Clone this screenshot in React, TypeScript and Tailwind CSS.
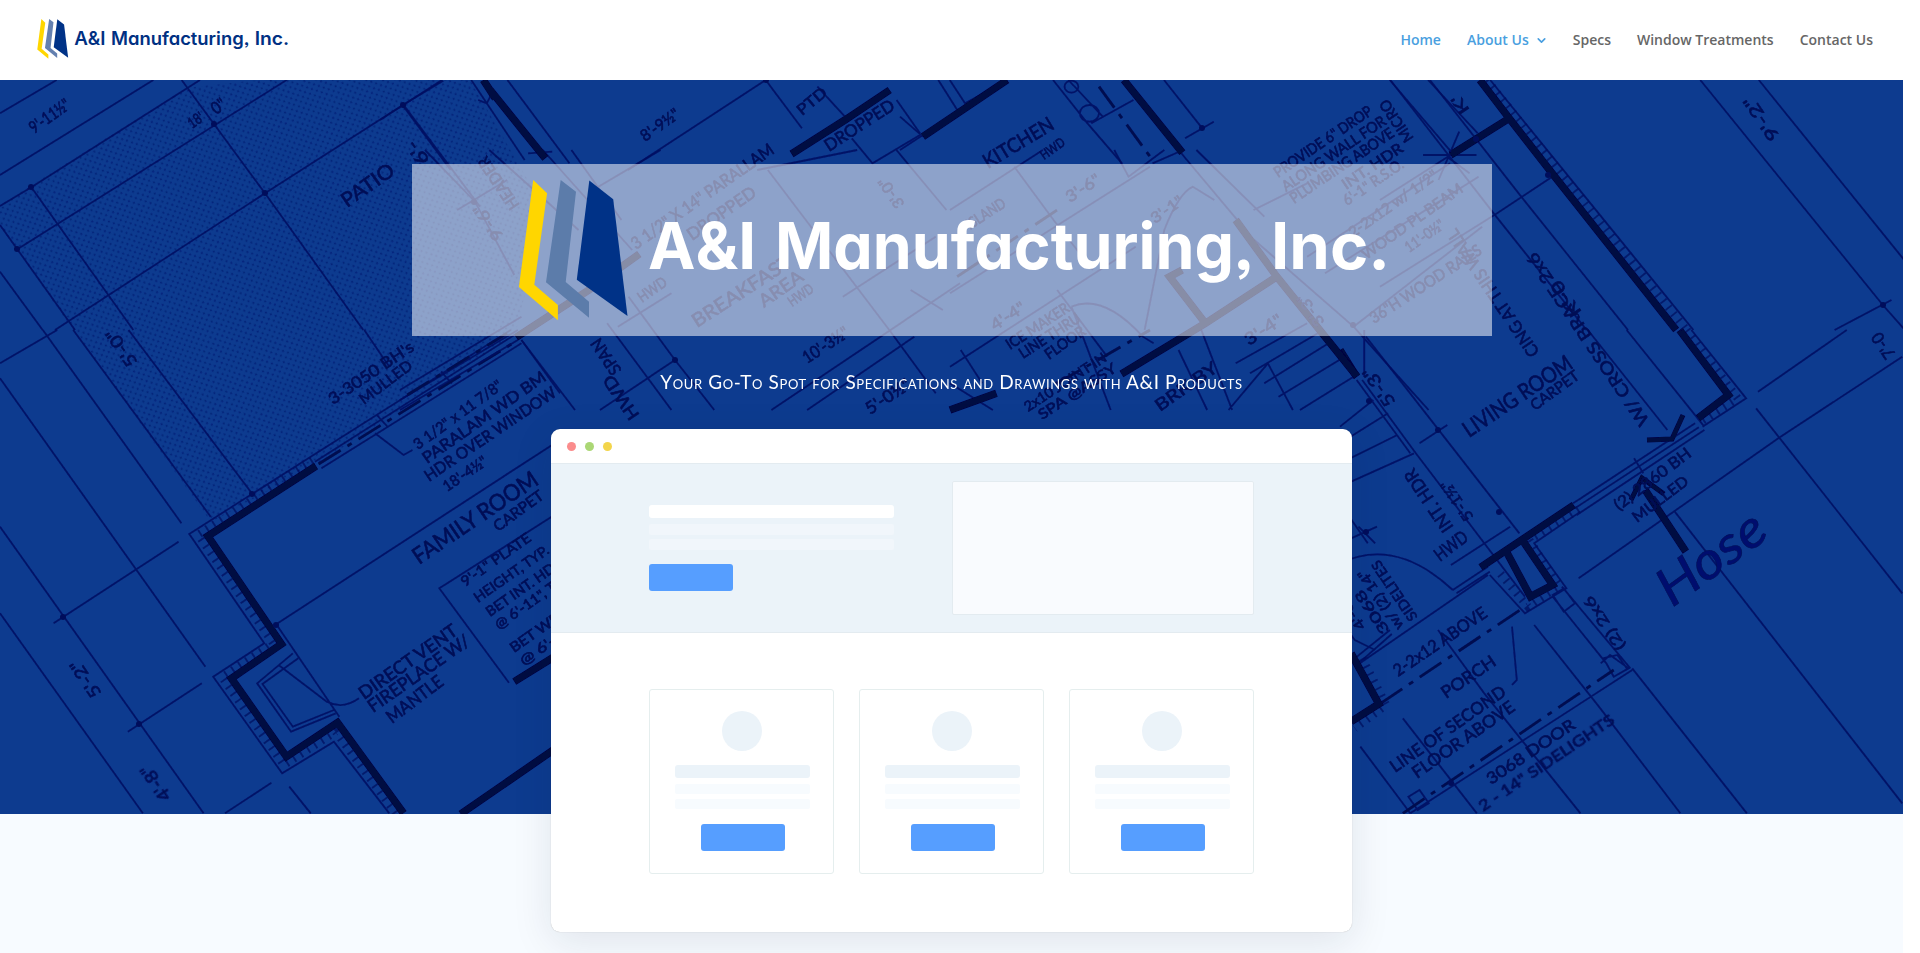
import React from "react";
import { ChevronDown } from "lucide-react";

type Sheet = { x: number; y: number; sx: number; thin: string; wall?: string; hatch?: string; dash?: string };

// Plan sheets: each has its own origin and horizontal scale; the vertical scale is one third.
const sheets: Sheet[] = [
  {
    x: 0, y: 0, sx: 0.3333,
    thin: "M0 340L170 240M0 525L460 240M0 618L94 562L600 240M52 748L860 240M0 675L225 990M0 815L128 990M94 562L400 990M545 240L795 580L1090 990M165 990L795 580L1210 314L1330 242M1210 314L1440 620",
  },
  {
    x: 0, y: 330, sx: 0.35714,
    thin: "M0 100L160 0M120 0L508 580M0 145L575 1010M205 0L590 560M360 0L705 490M0 590L570 1450M0 850L400 1450M150 880L500 635M358 1205L565 1060M630 1450L760 1358M810 1370L870 1450M770 885L1560 335M775 885L950 1160M1560 550L1230 775L1425 1058M1020 0L1090 110M1460 30L1568 190M820 970L720 1060L815 1205L940 1150M835 985L735 1062L820 1190L935 1140M780 1005L915 1115Q960 1140 1005 1105M1050 310L1130 375L1155 360M870 380L1430 0M882 395L1440 15M900 415L1460 40M1055 255L1085 290M1235 125L1265 160M870 380L530 612L740 940L597 1040L790 1330L935 1235L1090 1450",
    wall: "M885 408L582 618L788 942L648 1045L802 1280L945 1178L1130 1450M1290 1452L1560 1252M1440 1055L1560 975",
    hatch: "M875 392L555 614L765 940L622 1042L795 1305L940 1205L1108 1450",
    dash: "M892 402L1450 30",
  },
  {
    x: 1340, y: 330, sx: 0.3699,
    thin: "M70 20L485 610M60 150L205 370L500 800M45 150L190 370M670 0L885 300M775 0L985 290M1130 185L1370 0M645 745L1185 325L1520 80M1125 235L1520 790M905 545L1520 1420M790 1015L1100 1450M600 770L785 1015M525 885L700 1130L920 1450M170 1165L370 1450M265 900L390 1090L650 1450M55 1250L190 1450M630 520L960 280M635 535L970 292M640 555L985 300M795 385L820 430M40 1010L400 735M305 780L400 710M315 790L405 725M0 700Q150 620 305 780M215 340L290 285M0 640L100 590M50 590L95 640M0 520L75 640M0 290L90 210M0 340L130 250M0 400L155 315M0 470L200 370M300 705L460 590M40 985L135 900M50 1000L140 912M0 870L40 930L95 960M575 800L720 1000L740 1040L780 1015L730 975L705 1000M710 985L750 975L775 1015M185 1400L215 1380L240 1420L210 1440ZM575 795L605 775L635 820L605 845ZM465 890L478 1050L465 1065M190 1450L790 1020M950 0L1098 205L980 290M650 545L525 640L612 775L500 850L405 735",
    wall: "M918 0L1050 195L968 265M632 525L380 712M445 655L515 800L575 765L490 625M0 60L45 140M30 970L105 1122L30 1175M825 480L935 665",
    hatch: "M938 0L1075 205L972 278M645 538L512 630L592 768L508 830L425 720M60 985L125 1125L40 1195",
    dash: "M110 1120L500 830M170 1450L740 1020",
  },
  {
    x: 1380, y: 0, sx: 0.3444,
    thin: "M930 240L1460 915L1520 985M1100 240L1530 790M1320 990L1485 900M320 240L910 990M30 240L330 640L600 990M145 240L410 590L720 990M500 530L340 640L0 860M205 465L0 600M125 465L280 465M230 395L170 540M195 470L260 520",
    wall: "M290 240L375 355L500 520L860 990M375 355L205 465",
    hatch: "M310 240L890 990",
  },
  {
    x: 400, y: 150, sx: 0.35714,
    thin: "M70 0L210 155L320 375M160 180L300 90M250 0L500 240M400 0L650 300M540 120L730 0M1030 60L1370 540L1500 730M640 440L770 630L880 780M770 630L560 780M1040 780L1568 400M580 520L760 780M1390 0L1530 180M340 570L490 780M0 720L340 500M0 780L330 570M0 750L330 540M1240 440L1500 260M1430 420L1520 480M1000 60L1280 0M610 530L760 430M1140 780L1440 560M480 0L620 210",
    wall: "M325 562L540 412L670 312",
    dash: "M20 735L300 550",
  },
  {
    x: 950, y: 150, sx: 0.35714,
    thin: "M0 180L260 0M180 50L290 210L400 360M0 430L560 50M0 650L520 290M1000 320L1400 40M1050 370L1480 80M820 240L1130 530L1340 780M1130 530L1490 230M340 470Q430 430 540 560L570 580M545 540L600 240Q640 130 680 110L740 150M700 530L790 780M640 600L720 780M800 640L1000 520M840 670L1030 550M880 700L1060 580M920 740L1090 630M980 780L1130 680M780 780L890 640L960 780M1160 540L1160 680M690 0L880 200M640 0L820 230M850 180L1000 100M300 420L440 620M0 700L120 780M30 600L90 700M460 0L500 80L600 0M340 470L450 780",
    wall: "M480 672L715 520L915 380L800 210M715 520L615 380L650 360M915 380L1140 680M0 780L130 730",
    dash: "M300 700L560 540M20 380L300 180",
  },
  {
    x: 380, y: 80, sx: 0.3444,
    thin: "M265 0L420 240M370 0L550 250M0 120L180 0M65 75L205 270M720 270L1120 0L1225 145M1370 175L1430 250L1568 165M1270 20L1350 110M1500 60L1568 160M285 60L310 70L330 30M430 220L500 215",
    wall: "M300 0L335 55M1195 222L1350 120L1480 30M320 30L480 235",
  },
  {
    x: 900, y: 80, sx: 0.38265,
    thin: "M0 210L280 0M400 0L490 130L580 250M440 0L530 110M690 0L790 145M745 175L820 125M1280 0L1440 215M1380 0L1510 160M500 130L610 60M660 250L740 210M0 110L60 170M100 0L155 100M130 0L170 70L250 20M470 100a25 25 0 1 0 50 0a25 25 0 1 0 -50 0M430 20a18 18 0 1 0 36 0a18 18 0 1 0 -36 0",
    wall: "M585 0L738 218M60 170L280 0",
    dash: "M520 20L660 240",
  },
];

type Note = [x: number, y: number, angle: number, size: number, length: number, text: string];

const notes: Note[] = [
  [34, 134, -35, 17, 46, "9'-11½\""],
  [192, 129, -35, 15, 16, "18'"],
  [216, 115, -35, 17, 14, "0\""],
  [347, 208, -35, 20, 60, "PATIO"],
  [430, 160, 236, 18, 26, "6'-"],
  [138, 362, 236, 17, 42, "5'-0\""],
  [102, 693, 236, 17, 42, "5'-2\""],
  [172, 796, 236, 17, 40, "4'-8\""],
  [333, 405, -34, 16, 99, "3-3050 BH's"],
  [364, 405, -37, 15, 62, "MULLED"],
  [418, 450, -36, 15, 106, "3 1/2\" x 11 7/8\""],
  [427, 464, -35, 16, 147, "PARALAM WD BM"],
  [429, 482, -34, 16, 155, "HDR OVER WINDOW"],
  [447, 492, -34, 15, 50, "18'-4½\""],
  [419, 565, -34, 23, 146, "FAMILY ROOM"],
  [498, 532, -36, 15, 58, "CARPET"],
  [465, 587, -35, 14, 82, "9'-1\" PLATE"],
  [478, 603, -35, 14, 88, "HEIGHT, TYP."],
  [490, 617, -35, 14, 90, "BET INT. HDR"],
  [499, 630, -35, 14, 90, "@ 6'-11\", TYP"],
  [514, 653, -35, 14, 60, "BET WD"],
  [524, 666, -35, 14, 40, "@ 6'-"],
  [364, 700, -35, 18, 116, "DIRECT VENT"],
  [373, 713, -35, 18, 120, "FIREPLACE W/"],
  [392, 724, -37, 18, 66, "MANTLE"],
  [1469, 438, -34, 22, 127, "LIVING ROOM"],
  [1535, 411, -36, 15, 56, "CARPET"],
  [1650, 421, 236, 17, 205, "W/ CROSS BRACE 2x6"],
  [1619, 511, -37, 16, 92, "(2) 2860 BH"],
  [1637, 523, -37, 15, 66, "MULLED"],
  [1440, 562, -37, 18, 37, "HWD"],
  [1454, 527, 236, 18, 72, "INT. HDR"],
  [1396, 402, 236, 17, 44, "5'-3\""],
  [1474, 517, 236, 15, 46, "5'-1½\""],
  [1626, 646, 236, 15, 62, "(2) 2x6"],
  [1398, 677, -34, 17, 109, "2-2x12 ABOVE"],
  [1446, 699, -34, 17, 62, "PORCH"],
  [1395, 773, -35, 17, 137, "LINE OF SECOND"],
  [1417, 779, -35, 17, 121, "FLOOR ABOVE"],
  [1491, 785, -34, 16, 103, "3068 DOOR"],
  [1483, 812, -34, 16, 160, "2 - 14\" SIDELIGHTS"],
  [1418, 617, 236, 14, 70, "SIDELITES"],
  [1404, 626, 236, 14, 70, "w/ (2) 14\""],
  [1390, 630, 236, 14, 50, "3068"],
  [1366, 626, 236, 14, 30, "4'-0"],
  [988, 169, -31, 20, 79, "KITCHEN"],
  [1044, 160, -35, 13, 27, "HWD"],
  [697, 328, -33, 19, 115, "BREAKFAST"],
  [764, 308, -35, 18, 50, "AREA"],
  [792, 307, -35, 14, 28, "HWD"],
  [642, 303, -35, 15, 32, "HWD"],
  [636, 250, -35, 17, 170, "3 1/2\" X 14\" PARALLAM"],
  [692, 241, -35, 17, 80, "DROPPED"],
  [645, 142, -35, 16, 44, "8'-9½\""],
  [829, 152, -33, 17, 80, "DROPPED"],
  [802, 116, -40, 15, 34, "PTD"],
  [1070, 203, -33, 16, 38, "3'-6\""],
  [970, 230, -33, 15, 44, "ISLAND"],
  [1155, 224, -35, 15, 36, "3'-1\""],
  [807, 364, -33, 17, 52, "10'-3½\""],
  [870, 415, -33, 17, 50, "5'-0½\""],
  [995, 331, -33, 16, 38, "4'-4\""],
  [1010, 350, -33, 15, 72, "ICE MAKER"],
  [1023, 359, -33, 15, 70, "LINE THRU"],
  [1049, 360, -35, 15, 46, "FLOOR"],
  [1028, 412, -33, 14, 95, "2x10 JOINT IN"],
  [1042, 420, -33, 14, 90, "SPA @ASSY"],
  [1160, 412, -35, 17, 72, "BRK BY"],
  [1249, 346, -33, 17, 42, "3'-4\""],
  [1374, 324, -33, 16, 130, "36\"H WOOD RAILS"],
  [1409, 253, -35, 15, 45, "11'-0½\""],
  [1353, 238, -35, 15, 105, "2-2x12 w/ 1/2\""],
  [1366, 260, -35, 15, 120, "WOOD PL BEAM"],
  [1278, 178, -34, 15, 115, "PROVIDE 6\" DROP"],
  [1286, 192, -34, 15, 122, "ALONG WALL FOR"],
  [1294, 204, -34, 15, 122, "PLUMBING ABOVE"],
  [1346, 190, -34, 15, 70, "INT. HDR"],
  [1347, 206, -34, 15, 70, "6'-1\" R.S.O."],
  [1414, 138, 236, 15, 48, "MICRO"],
  [1470, 110, 236, 15, 20, "K'"],
  [1780, 136, 236, 17, 50, "9'-2\""],
  [1540, 352, 236, 17, 150, "CING AT THIS WALL"],
  [1582, 312, 236, 17, 40, "K'-0"],
  [1896, 354, 236, 17, 28, "7'-0"],
  [622, 370, 236, 17, 40, "SPAN"],
  [640, 415, 236, 17, 50, "HWD"],
  [504, 236, 236, 16, 40, "9'-6\""],
  [520, 205, 236, 16, 60, "HEADER"],
  [905, 204, 236, 15, 34, "3'-0\""],
  [1325, 322, 236, 15, 36, "3'-3\""],
];

const nodes: [number, number][] = [
  [31, 187], [17, 249], [403, 105], [265, 193], [214, 124], [252, 494], [276, 625], [63, 617], [139, 724],
  [474, 202], [766, 80], [675, 360], [1202, 128], [1438, 430], [1369, 401], [1476, 139], [1548, 175], [1883, 305],
  [1499, 512], [1353, 325], [1451, 783], [1366, 532],
];

function Blueprint() {
  return (
    <svg className="absolute inset-0 h-full w-full" viewBox="0 80 1903 734" preserveAspectRatio="none" aria-hidden="true">
      <defs>
        <pattern id="stipple" width="7.6" height="7" patternUnits="userSpaceOnUse" patternTransform="rotate(-24)">
          <circle cx="1.8" cy="1.8" r="1.05" fill="#031a70" />
          <circle cx="5.6" cy="5.3" r="1.05" fill="#031a70" />
        </pattern>
        <filter id="scan" x="0" y="0" width="100%" height="100%">
          <feGaussianBlur stdDeviation="0.6" />
        </filter>
      </defs>
      <g filter="url(#scan)">
        <path d="M0 205L186 88L260 80H470L545 210L515 335L320 462L211 522L73 330L0 226Z" fill="url(#stipple)" opacity="0.7" />
        {sheets.map((s, i) => (
          <g key={i} transform={`translate(${s.x} ${s.y}) scale(${s.sx} 0.33333)`} fill="none">
            <path d={s.thin} stroke="#020c62" strokeOpacity="0.88" strokeWidth="1.8" vectorEffect="non-scaling-stroke" />
            {s.hatch && (
              <path d={s.hatch} stroke="#030f60" strokeOpacity="0.75" strokeWidth="8" strokeDasharray="1.8 6.5" vectorEffect="non-scaling-stroke" />
            )}
            {s.dash && (
              <path d={s.dash} stroke="#020a50" strokeWidth="2.8" strokeDasharray="26 8 5 8" vectorEffect="non-scaling-stroke" />
            )}
            {s.wall && <path d={s.wall} stroke="#020742" strokeWidth="7.5" vectorEffect="non-scaling-stroke" />}
          </g>
        ))}
        {nodes.map(([x, y], i) => (
          <circle key={i} cx={x} cy={y} r="3" fill="#030d5c" />
        ))}
        <path d="M1647 440L1672 439L1683 415M1631 500L1642 478L1664 494" fill="none" stroke="#020742" strokeWidth="5" />
        <g fill="#020b56" fontFamily="Lato, sans-serif" stroke="#020b56" strokeWidth="0.6">
          {notes.map(([x, y, a, size, len, text], i) => (
            <text key={i} transform={`translate(${x} ${y}) rotate(${a})`} fontSize={size} textLength={len} lengthAdjust="spacingAndGlyphs">
              {text}
            </text>
          ))}
          <text transform="translate(1672 608) rotate(-36)" fontSize="52" fontStyle="italic" textLength="122" lengthAdjust="spacingAndGlyphs" fill="#04106e">
            Hose
          </text>
        </g>
      </g>
    </svg>
  );
}

function LogoMark({ slate }: { slate: string }) {
  return (
    <g>
      <path d="M533.2 180L547.1 193.3L534.3 284.7L557.9 305V320.3L518.9 287Z" fill="#ffd600" />
      <path d="M560.7 180L576 191.7L565.7 282L589 301.7V317.7L546 282.3Z" fill={slate} />
      <path d="M589.3 180.5L613.2 199.3L627.5 316L576.8 279.7Z" fill="#003287" />
    </g>
  );
}

function Wordmark({ fill, weight, transform }: { fill: string; weight: number; transform?: string }) {
  return (
    <text
      y="269.3"
      transform={transform}
      fill={fill}
      fontSize="64"
      fontWeight={weight}
      fontFamily="Inter, 'Liberation Sans', sans-serif"
      style={{ fontFeatureSettings: '"cv11", "ss03"' }}
    >
      <tspan x="648" textLength="108" lengthAdjust="spacingAndGlyphs">A&amp;I</tspan>{" "}
      <tspan x="775" textLength="478" lengthAdjust="spacingAndGlyphs">Manufacturing,</tspan>{" "}
      <tspan x="1271" textLength="119" lengthAdjust="spacingAndGlyphs">Inc.</tspan>
    </text>
  );
}

const links = [
  { label: "Home", active: true },
  { label: "About Us", active: true, menu: true },
  { label: "Specs" },
  { label: "Window Treatments" },
  { label: "Contact Us" },
];

function Header() {
  return (
    <header className="flex h-20 items-center justify-between bg-white pr-[30px] pl-[37px]">
      <svg className="mt-[-3px] h-10 w-[256px]" viewBox="518 180 901 140.8" role="img" aria-label="A&I Manufacturing, Inc.">
        <LogoMark slate="#6480b0" />
        <Wordmark fill="#003082" weight={600} transform="translate(-12 4) scale(1.02 1)" />
      </svg>
      <nav className="flex items-center gap-[26px] font-['Open_Sans',sans-serif] text-sm font-semibold">
        {links.map((l) => (
          <a key={l.label} href="#" className={l.active ? "flex items-center text-[#4a9fe0]" : "flex items-center text-[#666666]"}>
            {l.label}
            {l.menu && <ChevronDown className="mt-px ml-[6px] size-[13px] -mr-px" strokeWidth={3} />}
          </a>
        ))}
      </nav>
    </header>
  );
}

function FeatureCard() {
  return (
    <div className="flex h-[185px] w-[185px] flex-col items-center rounded-[3px] border border-[#e5eeee] pt-[21px]">
      <div className="size-10 rounded-full bg-[#ebf3f9]" />
      <div className="mt-[14px] ml-[2px] h-[13px] w-[135px] rounded-[3px] bg-[#ebf3f9]" />
      <div className="mt-[6px] ml-[2px] h-[10px] w-[135px] rounded-[2px] bg-[#f7fbfe]" />
      <div className="mt-[5px] ml-[2px] h-[10px] w-[135px] rounded-[2px] bg-[#f7fbfe]" />
      <div className="mt-[15px] ml-[2px] h-[27px] w-[84px] rounded-[3px] bg-[#569eff]" />
    </div>
  );
}

function BrowserMockup() {
  return (
    <div className="h-[503px] w-[801px] shrink-0 overflow-hidden rounded-[9px] bg-white shadow-[0_0_1px_rgba(0,0,0,0.3),0_10px_40px_rgba(20,30,60,0.1)]">
      <div className="flex h-[34px] items-center gap-[9px] pl-4">
        <span className="size-[9px] rounded-full bg-[#fb8c8c]" />
        <span className="size-[9px] rounded-full bg-[#abd775]" />
        <span className="size-[9px] rounded-full bg-[#f3d54b]" />
      </div>
      <div className="flex h-[170px] items-start justify-between border-y border-[#e3ebf0] bg-[#ebf3f9] pr-[98px] pl-[98px]">
        <div className="pt-[41px]">
          <div className="h-[13px] w-[245px] rounded-[3px] bg-white" />
          <div className="mt-[6px] h-[11px] w-[245px] rounded-[2px] bg-[#f1f6fb]" />
          <div className="mt-1 h-[11px] w-[245px] rounded-[2px] bg-[#f1f6fb]" />
          <div className="mt-[14px] h-[27px] w-[84px] rounded-[3px] bg-[#569eff]" />
        </div>
        <div className="mt-[17px] h-[134px] w-[302px] rounded-[2px] border border-[#e3ebf0] bg-[#f9fbfe]" />
      </div>
      <div className="flex gap-[25px] pt-14 pl-[98px]">
        <FeatureCard />
        <FeatureCard />
        <FeatureCard />
      </div>
    </div>
  );
}

export default function App() {
  return (
    <div className="h-[953px] overflow-hidden bg-white">
      <div className="h-full w-[1903px] overflow-hidden bg-[#f7fbff]">
        <Header />
        <section className="relative h-[734px] bg-[#0d3b8f]">
          <Blueprint />
          <div className="relative flex flex-col items-center pt-[84px]">
            <div className="h-[172px] w-[1080px] bg-white/[0.53]">
              <svg className="h-full w-full" viewBox="412 164 1080 172" role="img" aria-label="A&I Manufacturing, Inc.">
                <LogoMark slate="#5c7caa" />
                <Wordmark fill="#ffffff" weight={700} />
              </svg>
            </div>
            <p
              className="mt-8 flex h-7 items-center font-[Lato,sans-serif] text-[19px] tracking-[0.61px] whitespace-nowrap text-white"
              style={{ fontVariantCaps: "small-caps" }}
            >
              Your Go-To Spot for Specifications and Drawings with A&amp;I Products
            </p>
            <div className="mt-[33px]">
              <BrowserMockup />
            </div>
          </div>
        </section>
      </div>
    </div>
  );
}
